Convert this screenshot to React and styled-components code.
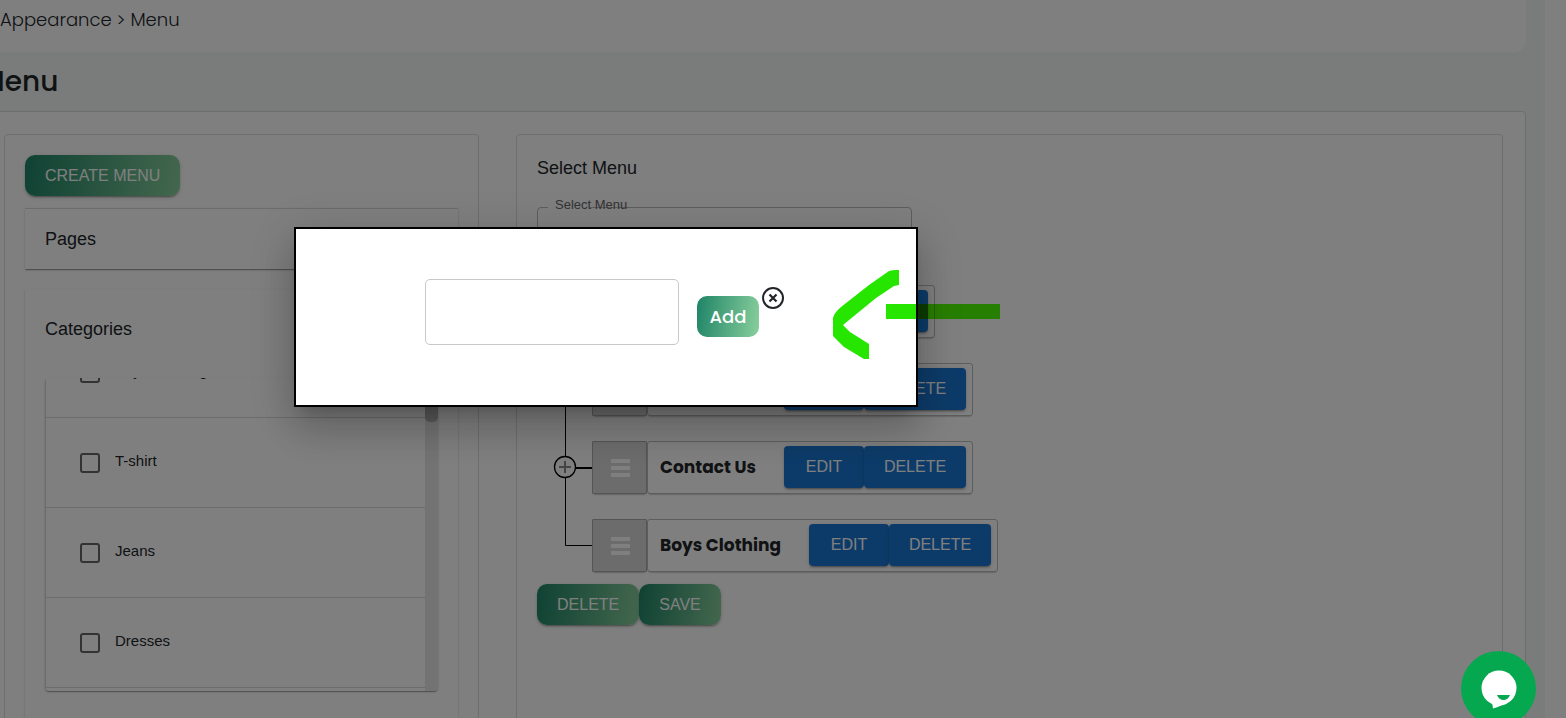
import React from 'react';
import styled, { createGlobalStyle } from 'styled-components';

const heading = 'Poppins, Inter, sans-serif';
const greenFill = 'linear-gradient(98deg, #1f8467, #88cf9c)';

const GlobalStyle = createGlobalStyle`
  *, *::before, *::after { box-sizing: border-box; }
  body {
    margin: 0;
    background: #fff;
    color: #212529;
    font-family: Arial, "Liberation Sans", sans-serif;
    overflow: hidden;
  }
`;

const Page = styled.div`
  height: 100vh;
  overflow: hidden;
  margin-right: 21px;
  padding-right: 19px;
  background: #f2f8f5;
`;

const Breadcrumb = styled.nav`
  height: 52px;
  background: #fff;
  border-bottom-right-radius: 12px;
  font: 300 18px/40px ${heading};
`;

const Crumb = styled.a`
  color: inherit;
  text-decoration: none;
`;

const Title = styled.h1`
  margin: 0 0 0 -20px;
  padding: 9px 0 8px;
  font: 500 28px/42px ${heading};
`;

const Board = styled.main`
  display: flex;
  align-items: stretch;
  gap: 37px;
  margin-left: -20px;
  padding: 22px 22px 22px 23px;
  background: #fff;
  border: 1px solid #d9dcdb;
  border-radius: 4px;
`;

const Panel = styled.section`
  flex: ${(p) => (p.$wide ? '1 1 0' : '0 0 475px')};
  min-width: 0;
  min-height: 640px;
  padding: 20px;
  border: 1px solid #dcdcdc;
  border-radius: 4px;
`;

const GreenButton = styled.button`
  height: 41px;
  padding: 0 20px;
  border: 0;
  border-radius: 10px;
  background: ${greenFill};
  color: #fff;
  font: ${(p) => (p.$title ? `500 18px ${heading}` : '16px Arial, "Liberation Sans", sans-serif')};
  box-shadow: ${(p) =>
    p.$title ? 'none' : '0 3px 1px -2px rgba(0,0,0,.2), 0 2px 2px rgba(0,0,0,.14), 0 1px 5px rgba(0,0,0,.12)'};
`;

const BlueButton = styled.button`
  height: 42px;
  width: ${(p) => (p.$narrow ? '80px' : '102px')};
  padding: 0;
  border: 0;
  border-radius: 4px;
  background: #1976d2;
  color: #fff;
  font: 16px Arial, "Liberation Sans", sans-serif;
  box-shadow: 0 3px 1px -2px rgba(0,0,0,.2), 0 2px 2px rgba(0,0,0,.14), 0 1px 5px rgba(0,0,0,.12);
`;

const paper = '0 2px 1px -1px rgba(0,0,0,.2), 0 1px 1px rgba(0,0,0,.14), 0 1px 3px rgba(0,0,0,.12)';

const Accordion = styled.div`
  margin-top: ${(p) => p.$gap};
  padding: 20px;
  padding-bottom: ${(p) => (p.$ruled ? '20px' : '60px')};
  background: #fff;
  border-top: ${(p) => (p.$ruled ? '1px solid #d8d8d8' : '0')};
  box-shadow: ${paper};
`;

const PanelTitle = styled.h2`
  margin: 0;
  font-size: 18px;
  font-weight: 400;
  line-height: ${(p) => p.$line};
`;

const ListBox = styled.div`
  display: flex;
  width: 393px;
  height: 313px;
  margin: 29px 0 0;
  overflow: hidden;
  border-radius: 4px;
  box-shadow: ${paper};
`;

const List = styled.ul`
  flex: 1;
  margin: -50px 0 0;
  padding: 0;
  list-style: none;
  border-left: 1px solid #d8d8d8;
`;

const ListRow = styled.li`
  height: 90px;
  padding: 16px 34px;
  border-bottom: 1px solid #d9d9d9;
`;

const CheckLabel = styled.label`
  display: flex;
  align-items: center;
  gap: 15px;
  height: 56px;
  font-size: 15px;
  padding-bottom: 4px;
`;

const Check = styled.input`
  appearance: none;
  width: 20px;
  height: 20px;
  margin: 6px 0 0;
  border: 2px solid #666;
  border-radius: 3px;
`;

const Track = styled.div`
  width: 13px;
  background: #e6e6e6;
`;

const Thumb = styled.div`
  width: 13px;
  height: 44px;
  border-radius: 0 0 5px 5px;
  background: #b4b4b4;
`;

const Field = styled.fieldset`
  width: 375px;
  height: 67px;
  margin: 15px 0 0;
  padding: 0 10px;
  border: 1px solid #bbb;
  border-radius: 4px;
`;

const FieldLegend = styled.legend`
  width: 42px;
  padding: 0 0 6px 7px;
  color: #666;
  font-size: 13px;
  line-height: 17px;
  white-space: nowrap;
`;

const Select = styled.select`
  appearance: none;
  width: 100%;
  height: 40px;
  border: 0;
  background: transparent;
  font-size: 16px;
`;

const Tree = styled.div`
  margin-top: 9px;
`;

const Node = styled.div`
  display: flex;
  align-items: center;
  height: 78px;
`;

const Scaffold = styled.svg`
  flex: none;
  width: 55px;
  height: 78px;
`;

const Handle = styled.div`
  display: flex;
  align-items: center;
  justify-content: center;
  width: 55px;
  height: 53px;
  padding: 1px 0 0 1px;
  background: #d9d9d9;
  border: 1px solid #aaa;
  border-radius: 1px;
  box-shadow: 0 2px 2px -2px rgba(0,0,0,.6);
`;

const NodeBody = styled.div`
  display: flex;
  align-items: center;
  height: 53px;
  padding: 0 6px 0 12px;
  background: #fff;
  border: 1px solid #bbb;
  border-radius: 3px;
  box-shadow: 0 2px 2px -2px rgba(0,0,0,.6);
`;

const NodeTitle = styled.span`
  width: ${(p) => p.$width}px;
  white-space: nowrap;
  font: 700 17px ${heading};
`;

const Actions = styled.div`
  display: flex;
`;

const Backdrop = styled.div`
  position: fixed;
  inset: 0;
  padding: 227px 0 0 294px;
  background: rgba(0, 0, 0, 0.5);
`;

const Dialog = styled.div`
  display: flex;
  align-items: flex-start;
  width: 624px;
  height: 180px;
  padding: 50px 129px;
  background: #fff;
  border: 2px solid #000;
  box-shadow: 0 11px 15px -7px rgba(0,0,0,.2), 0 24px 38px 3px rgba(0,0,0,.14), 0 9px 46px 8px rgba(0,0,0,.12);
`;

const NameInput = styled.input`
  flex: none;
  width: 254px;
  height: 66px;
  border: 1px solid #c8c8c8;
  border-radius: 5px;
  padding: 0 14px;
  font-size: 16px;
`;

const AddButton = styled(GreenButton)`
  flex: none;
  width: 62px;
  margin: 17px 3px 0 18px;
  padding: 0;
`;

const CloseButton = styled.button`
  flex: none;
  display: flex;
  margin-top: 8px;
  padding: 0;
  border: 0;
  background: none;
  color: #212529;
`;

const Marker = styled.svg`
  position: fixed;
  left: 826px;
  top: 262px;
  mix-blend-mode: darken;
`;

const ChatButton = styled.button`
  position: fixed;
  right: 30px;
  top: 651px;
  width: 75px;
  height: 75px;
  padding: 0;
  border: 0;
  border-radius: 50%;
  background: #05a84e;
`;

const nodes = [
  { id: 1, title: '', width: 86 },
  { id: 2, title: '', width: 124 },
  { id: 3, title: 'Contact Us', width: 124 },
  { id: 4, title: 'Boys Clothing', width: 149 },
];

const categories = ['Boys Clothing', 'T-shirt', 'Jeans', 'Dresses'];

function Branch({ last }) {
  return (
    <Scaffold viewBox="0 0 55 78">
      <path d={last ? 'M28.500 0V39.500H55' : 'M28.500 0V78'} fill="none" stroke="#000" />
      {!last && (
        <>
          <path d="M28 40H55" stroke="#000" strokeWidth="2" />
          <circle cx="28" cy="39" r="10.500" fill="#fff" stroke="#000" strokeWidth="1.300" />
          <path d="M22 39H34M28 33V45" stroke="#888" strokeWidth="2" />
        </>
      )}
    </Scaffold>
  );
}

function TreeNode({ title, width, last }) {
  return (
    <Node>
      <Branch last={last} />
      <Handle>
        <svg width="19" height="18" viewBox="0 0 19 18" fill="#fff">
          <path d="M0 0h19v4H0zM0 7h19v4H0zM0 14h19v4H0z" />
        </svg>
      </Handle>
      <NodeBody>
        <NodeTitle $width={width}>{title}</NodeTitle>
        <BlueButton $narrow>EDIT</BlueButton>
        <BlueButton>DELETE</BlueButton>
      </NodeBody>
    </Node>
  );
}

export default function App() {
  return (
    <>
      <GlobalStyle />
      <Page>
        <Breadcrumb>
          <Crumb href="#appearance">Appearance</Crumb> &gt; <Crumb href="#menu">Menu</Crumb>
        </Breadcrumb>
        <Title>Menu</Title>
        <Board>
          <Panel>
            <GreenButton>CREATE MENU</GreenButton>
            <Accordion $gap="12px" $ruled>
              <PanelTitle $line="20px">Pages</PanelTitle>
            </Accordion>
            <Accordion $gap="20px">
              <PanelTitle $line="40px">Categories</PanelTitle>
              <ListBox>
                <List>
                  {categories.map((name) => (
                    <ListRow key={name}>
                      <CheckLabel>
                        <Check type="checkbox" />
                        {name}
                      </CheckLabel>
                    </ListRow>
                  ))}
                </List>
                <Track>
                  <Thumb />
                </Track>
              </ListBox>
            </Accordion>
          </Panel>
          <Panel $wide>
            <PanelTitle $line="26px">Select Menu</PanelTitle>
            <Field>
              <FieldLegend>
                <label htmlFor="menu-select">Select Menu</label>
              </FieldLegend>
              <Select id="menu-select" />
            </Field>
            <Tree>
              {nodes.map((node, i) => (
                <TreeNode
                  key={node.id}
                  title={node.title}
                  width={node.width}
                  last={i === nodes.length - 1}
                />
              ))}
            </Tree>
            <Actions>
              <GreenButton>DELETE</GreenButton>
              <GreenButton>SAVE</GreenButton>
            </Actions>
          </Panel>
        </Board>
      </Page>
      <Backdrop>
        <Dialog role="dialog" aria-label="Create menu">
          <NameInput aria-label="Menu name" />
          <AddButton $title>Add</AddButton>
          <CloseButton aria-label="Close">
            <svg width="22" height="22" viewBox="0 0 22 22" fill="none" stroke="currentColor">
              <circle cx="11" cy="11" r="10" strokeWidth="2" />
              <path d="M7.500 7.500L14.500 14.500M14.500 7.500L7.500 14.500" strokeWidth="2.200" />
            </svg>
          </CloseButton>
        </Dialog>
      </Backdrop>
      <Marker width="180" height="100" viewBox="0 0 180 100" fill="#26e600">
        <path d="M73 8V23L68 24L50 36L17 63L24 70L43 82V97H38L18 85L7 74V56Q8 51 15 45L43 23L63 9L68 8Z" />
        <path d="M60 42H174V57H60Z" />
      </Marker>
      <ChatButton aria-label="Open chat">
        <svg width="75" height="75" viewBox="0 0 75 75">
          <circle cx="38" cy="37" r="17.500" fill="#fff" />
          <path d="M31 51L32 57.500Q44 54 50 48Z" fill="#fff" />
          <path d="M36 44H49Q47 49 42.500 49Q38 49 36 44Z" fill="#05a84e" />
        </svg>
      </ChatButton>
    </>
  );
}
